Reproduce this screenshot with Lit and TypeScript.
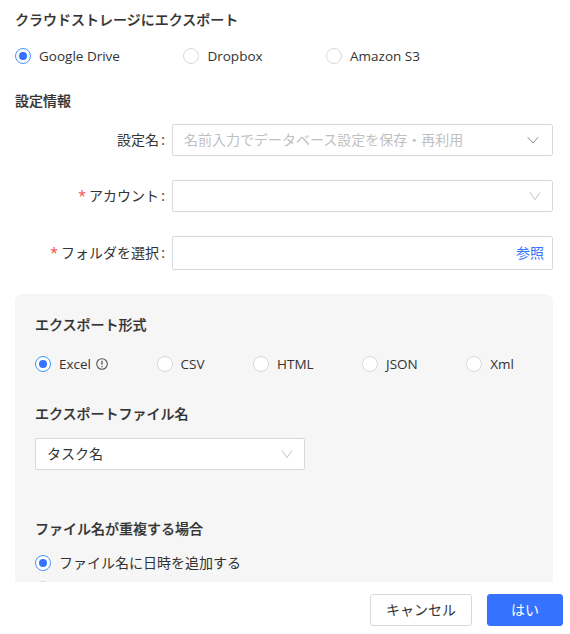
import { LitElement, html, css } from "lit";
import { customElement } from "lit/decorators.js";

const chevron = (cls: string) => html`<svg class="chev ${cls}" viewBox="0 0 14 14" width="14" height="14"><path d="${cls === "dark" ? "M1.7 4.2 7 10l5.3-5.8" : "M2 3.4 7 10.6l5-7.2"}" fill="none" stroke="currentColor" stroke-width="1"/></svg>`;

const radio = (label: string, on = false, extra: unknown = "", latin = true) => html`
  <label class="radio"><span class="dot ${on ? "on" : ""}"></span><span class="rl ${latin ? "lat" : ""}">${label}</span>${extra}</label>`;

const info = html`<svg class="info" viewBox="0 0 12 12" width="12" height="12"><circle cx="6" cy="6" r="5.3" fill="none" stroke="#555" stroke-width="1.1"/><path d="M6 2.8v4M6 8v1.3" stroke="#555" stroke-width="1.3" fill="none"/></svg>`;

const colon = html`<span class="colon">:</span>`;

@customElement("app-root")
export class AppRoot extends LitElement {
  static styles = css`
    :host {
      display: flex;
      flex-direction: column;
      height: 634px;
      width: 570px;
      overflow: hidden;
      background: #fff;
      color: #333;
      font-family: "Open Sans", "Noto Sans CJK JP", sans-serif;
      font-size: 14px;
    }
    .scroll { height: 582px; overflow: hidden; padding: 0 17px 0 15px; box-sizing: border-box; flex: none; }
    .title { font-weight: 500; font-size: 14px; line-height: 20px; margin: 0; color: #333; -webkit-text-stroke: 0.2px #333; }
    .t1 { padding-top: 10px; }
    .radios { display: flex; align-items: center; height: 20px; }
    .top { gap: 63.5px; margin-top: 16px; }
    .fmt { gap: 48.5px; margin-top: 19px; }
    .radio { display: inline-flex; align-items: center; gap: 8px; height: 20px; line-height: 20px; white-space: nowrap; }
    .lat { font-size: 13.5px; }
    .dot { width: 16px; height: 16px; box-sizing: border-box; border: 1px solid #d9d9d9; border-radius: 50%; background: #fff; position: relative; flex: none; }
    .dot.on { border-color: #4096ff; }
    .dot.on::after { content: ""; position: absolute; inset: 3px; border-radius: 50%; background: #3572fe; }
    .info { margin-left: -3px; }
    .t2 { margin-top: 25px; }
    .row { display: grid; grid-template-columns: 150px 381px; column-gap: 7px; align-items: center; }
    .row .lab { text-align: right; white-space: nowrap; line-height: 20px; }
    .colon { margin-left: 2.25px; }
    .req { color: #f5484a; margin-right: 3px; }
    .r1 { margin-top: 13px; }
    .r2, .r3 { margin-top: 24px; }
    .field { box-sizing: border-box; height: 32px; border: 1px solid #d9d9d9; border-radius: 2px; background: #fff; display: flex; align-items: center; justify-content: space-between; padding: 0 10px 0 11px; }
    .field.d { padding-right: 12px; }
    .r3 .field { height: 34px; padding: 0 8px 0 12px; }
    .ph, .val, .link { margin-bottom: 2px; }
    .ph { color: #bfbfbf; }
    .link { color: #3572fe; font-size: 14px; }
    .chev { flex: none; }
    .chev.dark { color: #8c8c8c; }
    .chev.light { color: #c4c4c4; }
    .panel { margin-top: 24px; background: #f6f6f6; border-radius: 8px 8px 0 0; padding: 21px 20px 40px; width: 538px; box-sizing: border-box; }
    .h2 { margin-top: 30px; }
    .sel { width: 270px; margin-top: 14px; }
    .h3 { margin-top: 49px; }
    .v1 { margin-top: 14px; }
    .v2 { margin-top: 6px; }
    .footer { height: 52px; flex: none; display: flex; justify-content: flex-end; gap: 15px; padding: 12px 7px 0 0; box-sizing: border-box; }
    .btn { box-sizing: border-box; height: 32px; padding: 0 0 2px; border-radius: 3px; font: inherit; display: flex; align-items: center; justify-content: center; }
    .cancel { width: 102px; background: #fff; border: 1px solid #d9d9d9; color: #333; }
    .ok { width: 76px; background: #3572fe; border: 1px solid #3572fe; color: #fff; }
  `;

  render() {
    return html`
      <div class="scroll">
        <h3 class="title t1">クラウドストレージにエクスポート</h3>
        <div class="radios top">
          ${radio("Google Drive", true)}${radio("Dropbox")}${radio("Amazon S3")}
        </div>
        <h3 class="title t2">設定情報</h3>
        <div class="row r1">
          <span class="lab">設定名${colon}</span>
          <div class="field d"><span class="ph">名前入力でデータベース設定を保存・再利用</span>${chevron("dark")}</div>
        </div>
        <div class="row r2">
          <span class="lab"><span class="req">*</span>アカウント${colon}</span>
          <div class="field"><span></span>${chevron("light")}</div>
        </div>
        <div class="row r3">
          <span class="lab"><span class="req">*</span>フォルダを選択${colon}</span>
          <div class="field"><span></span><span class="link">参照</span></div>
        </div>
        <div class="panel">
          <h3 class="title">エクスポート形式</h3>
          <div class="radios fmt">
            ${radio("Excel", true, info)}${radio("CSV")}${radio("HTML")}${radio("JSON")}${radio("Xml")}
          </div>
          <h3 class="title h2">エクスポートファイル名</h3>
          <div class="field sel"><span class="val">タスク名</span>${chevron("light")}</div>
          <h3 class="title h3">ファイル名が重複する場合</h3>
          <div class="radios v1">${radio("ファイル名に日時を追加する", true, "", false)}</div>
          <div class="radios v2"><span class="dot"></span></div>
        </div>
      </div>
      <div class="footer">
        <button class="btn cancel">キャンセル</button>
        <button class="btn ok">はい</button>
      </div>
    `;
  }
}
